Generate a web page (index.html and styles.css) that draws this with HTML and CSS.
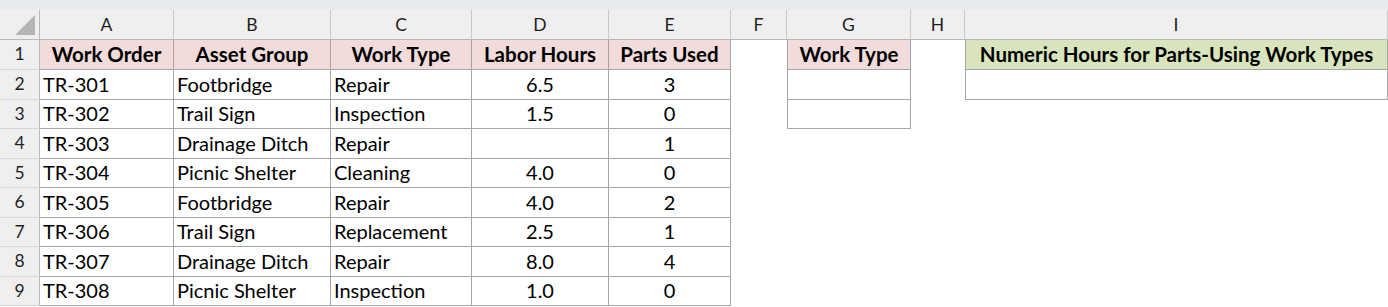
FILE: index.html
```html
<!DOCTYPE html>
<html>
<head>
<meta charset="utf-8">
<link rel="stylesheet" href="styles.css">
</head>
<body>
<div class="sheet">
  <div class="topbar"></div>

  <div class="corner"><svg class="tri" width="20" height="20" viewBox="0 0 20 20"><polygon points="20,0 20,20 0,20" fill="#b5b5b5"/></svg></div>
  <div class="colhdr">A</div>
  <div class="colhdr">B</div>
  <div class="colhdr">C</div>
  <div class="colhdr">D</div>
  <div class="colhdr">E</div>
  <div class="colhdr">F</div>
  <div class="colhdr">G</div>
  <div class="colhdr">H</div>
  <div class="colhdr">I</div>

  <div class="rowhdr">1</div>
  <div class="cell t hd ctr">Work Order</div>
  <div class="cell t hd ctr">Asset Group</div>
  <div class="cell t hd ctr">Work Type</div>
  <div class="cell t hd ctr">Labor Hours</div>
  <div class="cell t hd ctr">Parts Used</div>
  <div class="cell"></div>
  <div class="cell t bl hd ctr">Work Type</div>
  <div class="cell"></div>
  <div class="cell t bl gr ctr">Numeric Hours for Parts-Using Work Types</div>

  <div class="rowhdr">2</div>
  <div class="cell t">TR-301</div>
  <div class="cell t">Footbridge</div>
  <div class="cell t">Repair</div>
  <div class="cell t ctr">6.5</div>
  <div class="cell t ctr">3</div>
  <div class="cell"></div>
  <div class="cell t bl"></div>
  <div class="cell"></div>
  <div class="cell t bl"></div>

  <div class="rowhdr">3</div>
  <div class="cell t">TR-302</div>
  <div class="cell t">Trail Sign</div>
  <div class="cell t">Inspection</div>
  <div class="cell t ctr">1.5</div>
  <div class="cell t ctr">0</div>
  <div class="cell"></div>
  <div class="cell t bl"></div>
  <div class="cell"></div>
  <div class="cell"></div>

  <div class="rowhdr">4</div>
  <div class="cell t">TR-303</div>
  <div class="cell t">Drainage Ditch</div>
  <div class="cell t">Repair</div>
  <div class="cell t ctr"></div>
  <div class="cell t ctr">1</div>
  <div class="cell"></div>
  <div class="cell"></div>
  <div class="cell"></div>
  <div class="cell"></div>

  <div class="rowhdr">5</div>
  <div class="cell t">TR-304</div>
  <div class="cell t">Picnic Shelter</div>
  <div class="cell t">Cleaning</div>
  <div class="cell t ctr">4.0</div>
  <div class="cell t ctr">0</div>
  <div class="cell"></div>
  <div class="cell"></div>
  <div class="cell"></div>
  <div class="cell"></div>

  <div class="rowhdr">6</div>
  <div class="cell t">TR-305</div>
  <div class="cell t">Footbridge</div>
  <div class="cell t">Repair</div>
  <div class="cell t ctr">4.0</div>
  <div class="cell t ctr">2</div>
  <div class="cell"></div>
  <div class="cell"></div>
  <div class="cell"></div>
  <div class="cell"></div>

  <div class="rowhdr">7</div>
  <div class="cell t">TR-306</div>
  <div class="cell t">Trail Sign</div>
  <div class="cell t">Replacement</div>
  <div class="cell t ctr">2.5</div>
  <div class="cell t ctr">1</div>
  <div class="cell"></div>
  <div class="cell"></div>
  <div class="cell"></div>
  <div class="cell"></div>

  <div class="rowhdr">8</div>
  <div class="cell t">TR-307</div>
  <div class="cell t">Drainage Ditch</div>
  <div class="cell t">Repair</div>
  <div class="cell t ctr">8.0</div>
  <div class="cell t ctr">4</div>
  <div class="cell"></div>
  <div class="cell"></div>
  <div class="cell"></div>
  <div class="cell"></div>

  <div class="rowhdr">9</div>
  <div class="cell t">TR-308</div>
  <div class="cell t">Picnic Shelter</div>
  <div class="cell t">Inspection</div>
  <div class="cell t ctr">1.0</div>
  <div class="cell t ctr">0</div>
  <div class="cell"></div>
  <div class="cell"></div>
  <div class="cell"></div>
  <div class="cell"></div>
</div>
</body>
</html>
```

FILE: styles.css
```css
html, body {
  margin: 0;
  padding: 0;
  background: #ffffff;
}

.sheet {
  display: grid;
  grid-template-columns: 40px 134px 157px 141px 137px 122px 56px 124px 54px 423px;
  grid-template-rows: 10px 30px 30px 30px 29px 30px 29px 30px 29px 30px 29px;
  width: 1388px;
  height: 307px;
  overflow: hidden;
  font-family: Lato, "Open Sans", sans-serif;
  color: #000;
}

.sheet > div {
  box-sizing: border-box;
}

.topbar {
  grid-column: 1 / -1;
  background: #e7eaee;
}

.corner {
  background: #efefef;
  border-right: 1px solid #b9b9b9;
  border-bottom: 1px solid #b9b9b9;
  display: flex;
  align-items: flex-end;
  justify-content: flex-end;
  padding: 0 4px 4px 0;
}

.tri {
  display: block;
}

.colhdr {
  background: #efefef;
  border-right: 1px solid #c9c9c9;
  border-bottom: 1px solid #b9b9b9;
  display: flex;
  align-items: center;
  justify-content: center;
  font-size: 17.5px;
  color: #1f1f1f;
}

.rowhdr {
  background: #efefef;
  border-right: 1px solid #b9b9b9;
  border-bottom: 1px solid #d6d6d6;
  display: flex;
  align-items: center;
  justify-content: center;
  font-size: 17.5px;
  color: #1f1f1f;
  padding-bottom: 2px;
}

.cell {
  display: flex;
  align-items: center;
  padding: 0 0 2px 3px;
  font-size: 20px;
  white-space: nowrap;
  overflow: hidden;
}

.t {
  border-right: 1px solid #a6a6a6;
  border-bottom: 1px solid #a6a6a6;
}

.bl {
  border-left: 1px solid #a6a6a6;
}

.ctr {
  justify-content: center;
  padding-left: 0;
}

.hd {
  background: #f2dcdb;
  font-weight: 700;
  font-size: 20.5px;
}

.gr {
  background: #d8e4bc;
  font-weight: 700;
  font-size: 20.5px;
}
```
